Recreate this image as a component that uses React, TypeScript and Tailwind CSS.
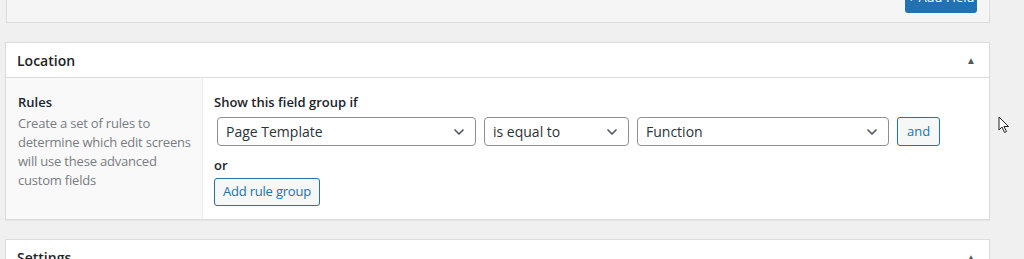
import { ChevronDown } from "lucide-react";

const font = { fontFamily: '"Open Sans", "Noto Sans", sans-serif' };

function Select({ label, width }: { label: string; width: string }) {
	return (
		<div
			className={`${width} h-[29px] flex items-center justify-between pl-[8px] pr-[8px] border border-[#8c8f94] rounded-[4px] bg-white text-[14px] text-[#2c3338]`}
		>
			<span>{label}</span>
			<ChevronDown className="w-[16px] h-[16px] text-[#50575e]" strokeWidth={2.5} />
		</div>
	);
}

function Cursor() {
	return (
		<svg
			className="absolute left-[998px] top-[116px]"
			width="12"
			height="18"
			viewBox="0 0 12 18"
		>
			<path
				d="M1 1 L1 14 L4 11 L6.5 16.5 L8.5 15.5 L6 10.5 L10.5 10.5 Z"
				fill="white"
				stroke="#222"
				strokeWidth="1"
				strokeLinejoin="round"
			/>
		</svg>
	);
}

export default function App() {
	return (
		<div className="relative w-[1024px] h-[259px] overflow-hidden bg-[#f0f0f1]" style={font}>
			<div className="pl-[6px] w-[990px]">
				{/* previous panel footer */}
				<div className="h-[23px] flex items-end justify-end pr-[12px] pb-[9px] bg-[#f5f5f5] border-x border-b border-[#dcdcde]">
					<button className="w-[72px] h-[30px] rounded-[3px] bg-[#2271b1] text-white text-[13px]">
						+ Add Field
					</button>
				</div>

				{/* Location */}
				<div className="mt-[19px] -ml-[1px] bg-white border border-[#dcdcde] shadow-[0_1px_1px_rgba(0,0,0,0.04)]">
					<div className="h-[35px] flex items-center justify-between pl-[11px] pr-[13px] border-b border-[#dcdcde]">
						<span className="text-[14px] font-semibold text-[#1d2327]">Location</span>
						<span className="text-[10px] text-[#50575e]">▲</span>
					</div>
					<div className="flex h-[141px]">
						<div className="w-[197px] shrink-0 bg-[#f9f9f9] border-r border-[#eeeeee] pl-[12px] pt-[15px]">
							<div className="text-[13px] font-semibold text-[#1d2327] leading-[18px]">Rules</div>
							<p className="mt-[3px] text-[13px] leading-[19px] text-[#787c82] tracking-[-0.2px]">
								Create a set of rules to determine which edit screens will use these advanced custom
								fields
							</p>
						</div>
						<div className="pl-[11px] pt-[15px]">
							<div className="text-[13px] font-semibold text-[#1d2327] leading-[18px]">
								Show this field group if
							</div>
							<div className="mt-[6px] flex items-center pl-[3px] gap-[8px]">
								<Select label="Page Template" width="w-[259px]" />
								<Select label="is equal to" width="w-[145px]" />
								<Select label="Function" width="w-[252px]" />
								<button className="h-[29px] px-[9px] rounded-[3px] border border-[#2271b1] bg-[#f6f7f7] text-[#2271b1] text-[13px]">
									and
								</button>
							</div>
							<div className="mt-[10px] text-[13px] font-semibold text-[#1d2327] leading-[18px]">or</div>
							<button className="mt-[4px] h-[28px] w-[106px] rounded-[3px] border border-[#2271b1] bg-[#f6f7f7] text-[#2271b1] text-[13px] tracking-[-0.2px]">
								Add rule group
							</button>
						</div>
					</div>
				</div>

				{/* Settings */}
				<div className="mt-[19px] -ml-[1px] bg-white border border-[#dcdcde]">
					<div className="h-[35px] flex items-center justify-between pl-[11px] pr-[13px]">
						<span className="text-[14px] font-semibold text-[#1d2327]">Settings</span>
						<span className="text-[10px] text-[#50575e]">▲</span>
					</div>
				</div>
			</div>
			<Cursor />
		</div>
	);
}
